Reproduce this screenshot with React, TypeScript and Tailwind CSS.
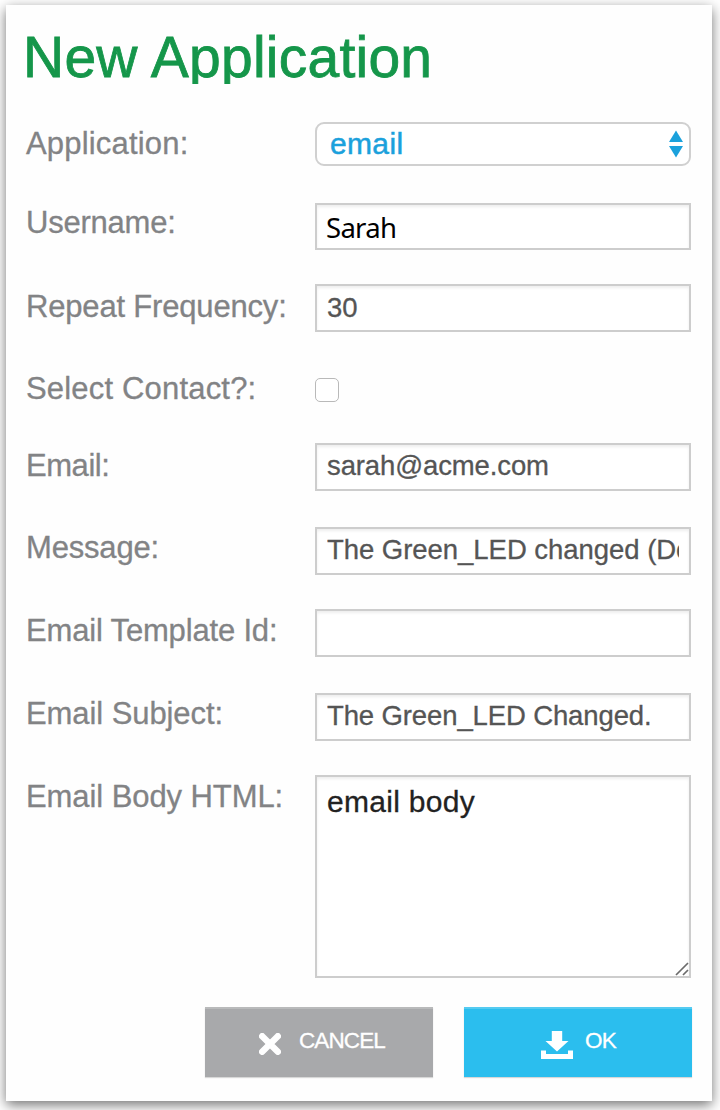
import type { ReactNode } from 'react';

const fieldBase =
  "block w-full border-2 border-[#cdcdcd] bg-white px-[10px] outline-none shadow-[inset_0_2px_3px_rgba(0,0,0,0.07)] text-[27.5px] text-[#555555] [-webkit-text-stroke:0.3px_#555555] [font-family:'Liberation_Sans',Arial,sans-serif]";

function Row({ label, className, labelClass, children }: {
  label: string;
  className: string;
  labelClass: string;
  children: ReactNode;
}) {
  return (
    <div className={`flex items-start ${className}`}>
      <label className={`w-[289px] shrink-0 whitespace-nowrap text-[31px] leading-[36px] text-[#828385] [-webkit-text-stroke:0.3px_#828385] ${labelClass}`}>
        {label}
      </label>
      <div className="w-[376px] shrink-0">{children}</div>
    </div>
  );
}

export default function App() {
  return (
    <div className="h-[1110px] w-[720px] overflow-hidden bg-white pl-[6px] pt-[5px] antialiased [font-family:'Liberation_Sans',Arial,sans-serif]">
      <div className="h-[1096px] w-[706px] bg-[#fefefe] pl-[20px] shadow-[0_4px_12px_rgba(0,0,0,0.55)]">
        <h1 className="-ml-[3px] h-[79px] overflow-hidden whitespace-nowrap pt-[20px] text-[57px] leading-[64px] tracking-[0.25px] text-[#15964a] [-webkit-text-stroke:0.8px_#15964a]">
          New Application
        </h1>

        <Row label="Application:" className="mt-[38px] h-[81px]" labelClass="pt-[4px] tracking-[0.18px]">
          <div className="flex h-[44px] items-center justify-between rounded-[9px] border-2 border-[#d0d0d0] bg-white pl-[13px] pr-[6px]">
            <span className="text-[30px] leading-[36px] tracking-[0.35px] text-[#1ba1dc] [-webkit-text-stroke:0.5px_#1ba1dc]">email</span>
            <svg width="14" height="28" viewBox="0 0 14 28" fill="#1ba1dc">
              <path d="M7 0.5 14 12H0Z" />
              <path d="M0 16H14L7 27.5Z" />
            </svg>
          </div>
        </Row>

        <Row label="Username:" className="h-[81px]" labelClass="pt-[2px] tracking-[-0.22px]">
          <input
            className="block h-[47px] w-full border-2 border-[#cdcdcd] bg-white px-[9px] pt-[1px] text-[27.5px] tracking-[-0.7px] text-black outline-none shadow-[inset_0_2px_3px_rgba(0,0,0,0.07)] [font-family:'Noto_Sans',sans-serif]"
            defaultValue="Sarah"
          />
        </Row>

        <Row label="Repeat Frequency:" className="h-[86px]" labelClass="pt-[5px] tracking-[-0.18px]">
          <input className={`h-[48px] tracking-[-0.12px] ${fieldBase}`} defaultValue="30" />
        </Row>

        <Row label="Select Contact?:" className="h-[73px]" labelClass="pt-px tracking-[0.18px]">
          <input
            type="checkbox"
            className="mt-[8px] block size-[24px] appearance-none rounded-[5px] border-[1.5px] border-[#b9b9b9] bg-white"
          />
        </Row>

        <Row label="Email:" className="h-[84px]" labelClass="pt-[5px] tracking-[-0.45px]">
          <input className={`h-[48px] pb-[2px] tracking-[-0.12px] ${fieldBase}`} defaultValue="sarah@acme.com" />
        </Row>

        <Row label="Message:" className="h-[82px]" labelClass="pt-[3px] tracking-[-0.18px]">
          <input className={`h-[48px] pb-[2px] tracking-[-0.04px] ${fieldBase}`} defaultValue="The Green_LED changed (Device)" />
        </Row>

        <Row label="Email Template Id:" className="h-[84px]" labelClass="pt-[4px] tracking-[-0.17px]">
          <input className={`h-[48px] ${fieldBase}`} />
        </Row>

        <Row label="Email Subject:" className="h-[82px]" labelClass="pt-[3px] tracking-[-0.08px]">
          <input className={`h-[48px] pb-[2px] tracking-[-0.12px] ${fieldBase}`} defaultValue="The Green_LED Changed." />
        </Row>

        <Row label="Email Body HTML:" className="h-[232px]" labelClass="pt-[4px] tracking-[-0.08px]">
          <div className="relative">
            <textarea
              className="block h-[203px] w-full resize-none border-2 border-[#cdcdcd] bg-white px-[10px] pt-[7px] text-[30px] leading-[36px] tracking-[0.3px] text-[#222222] outline-none shadow-[inset_0_2px_3px_rgba(0,0,0,0.07)] [-webkit-text-stroke:0.3px_#222222] [font-family:'Liberation_Sans',Arial,sans-serif]"
              defaultValue="email body"
            />
            <svg
              className="absolute bottom-[2px] right-[2px]"
              width="14"
              height="14"
              viewBox="0 0 14 14"
              fill="none"
              stroke="#6b6b6b"
              strokeWidth="1.7"
            >
              <path d="M1 13 13 1M8 13 13 8" />
            </svg>
          </div>
        </Row>

        <div className="ml-[179px] flex gap-[31px] text-[22.5px] leading-[26px] text-white [-webkit-text-stroke:0.3px_#ffffff]">
          <button className="flex h-[70px] w-[228px] items-start bg-[#a8a9ab] pl-[54px] shadow-[inset_0_2px_0_rgba(255,255,255,0.2),0_1px_1px_rgba(0,0,0,0.15)]">
            <svg className="mt-[26px]" width="22" height="22" viewBox="0 0 22 22" stroke="white" strokeWidth="6.4" strokeLinecap="round">
              <path d="M3.2 3.2 18.8 18.8M18.8 3.2 3.2 18.8" />
            </svg>
            <span className="ml-[18px] mt-[21px] tracking-[-0.9px]">CANCEL</span>
          </button>
          <button className="flex h-[70px] w-[228px] items-start bg-[#2bbeee] pl-[76px] shadow-[inset_0_2px_0_rgba(255,255,255,0.2),0_1px_1px_rgba(0,0,0,0.15)]">
            <svg className="mt-[24px]" width="34" height="29" viewBox="0 0 34 29" fill="white">
              <path d="M11.8 0H22.2V10H28.5L17 20.5 5.5 10H11.8Z" />
              <path d="M1 19.5H6V23H28V19.5H33V28H1Z" />
            </svg>
            <span className="ml-[11px] mt-[21px] tracking-[-0.75px]">OK</span>
          </button>
        </div>
      </div>
    </div>
  );
}
